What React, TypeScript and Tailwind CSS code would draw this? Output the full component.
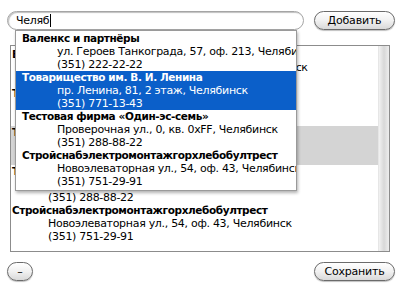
import React from "react";

type Item = { title: string; addr: string; phone: string };

const items: Item[] = [
  { title: "Валенкс и партнёры", addr: "ул. Героев Танкограда, 57, оф. 213, Челябинск", phone: "(351) 222-22-22" },
  { title: "Товарищество им. В. И. Ленина", addr: "пр. Ленина, 81, 2 этаж, Челябинск", phone: "(351) 771-13-43" },
  { title: "Тестовая фирма «Один-эс-семь»", addr: "Проверочная ул., 0, кв. 0xFF, Челябинск", phone: "(351) 288-88-22" },
  { title: "Стройснабэлектромонтажгорхлебобултрест", addr: "Новоэлеваторная ул., 54, оф. 43, Челябинск", phone: "(351) 751-29-91" },
];

const listItems: Item[] = [items[0], items[1], items[1], items[2], items[3]];

function AquaButton({ label, className }: { label: string; className: string }) {
  return (
    <div
      className={
        "flex items-center justify-center rounded-full border border-[#6b6b6b] bg-gradient-to-b from-[#ffffff] via-[#f1f1f1] to-[#d9d9d9] shadow-[0_1px_1px_rgba(0,0,0,0.25)] text-black text-[11px] leading-[13px] tracking-[-0.2px] " +
        className
      }
    >
      {label}
    </div>
  );
}

function Entry({ it, titlePad, addrPad, className }: { it: Item; titlePad: string; addrPad: string; className: string }) {
  return (
    <div className={"h-[39px] whitespace-nowrap " + className}>
      <div className={"h-[13px] font-bold text-[10.5px] tracking-[-0.4px] " + titlePad}>{it.title}</div>
      <div className={"h-[13px] " + addrPad}>{it.addr}</div>
      <div className={"h-[13px] " + addrPad}>{it.phone}</div>
    </div>
  );
}

export default function App() {
  return (
    <div
      className="relative w-[400px] h-[290px] overflow-hidden bg-white text-black text-[11px] leading-[13px] tracking-[-0.3px]"
      style={{ fontFamily: '"DejaVu Sans", Verdana, sans-serif' }}
    >
      {/* top row */}
      <div className="flex items-center pl-[7px] pt-[11px] gap-[10px]">
        <div className="flex items-center w-[297px] h-[19px] rounded-full border border-[#a5a5a5] shadow-[inset_1px_1px_1px_rgba(0,0,0,0.25)] pl-[8px]">
          <span>Челяб</span>
          <span className="inline-block w-px h-[13px] bg-black ml-[1px]" />
        </div>
        <AquaButton label="Добавить" className="w-[81px] h-[19px]" />
      </div>

      {/* list */}
      <div className="ml-[10px] mt-[15px] w-[380px] h-[207px] border border-[#8c8c8c] flex overflow-hidden">
        <div className="flex-1 pt-[2px] overflow-hidden">
          {listItems.map((it, i) => (
            <Entry
              key={i}
              it={it}
              titlePad="pl-[1px]"
              addrPad="pl-[37px]"
              className={i === 2 ? "bg-[#d4d4d4]" : ""}
            />
          ))}
        </div>
        <div className="w-[11px] h-full border-l border-[#e6e6e6] bg-gradient-to-r from-[#f2f2f2] via-[#d8d8d8] to-[#eeeeee]" />
      </div>

      {/* bottom row */}
      <div className="flex items-center justify-between pl-[7px] pr-[5px] mt-[10px]">
        <AquaButton label="–" className="w-[26px] h-[19px]" />
        <AquaButton label="Сохранить" className="w-[81px] h-[19px]" />
      </div>

      {/* autocomplete popup */}
      <div className="absolute left-[15px] top-[30px] w-[282px] h-[161px] bg-white border border-[#9a9a9a] shadow-[1px_2px_3px_rgba(0,0,0,0.3)] pt-[1px] overflow-hidden">
        {items.map((it, i) => (
          <Entry
            key={i}
            it={it}
            titlePad="pl-[6px]"
            addrPad="pl-[41px]"
            className={i === 1 ? "bg-[#0b5fc9] text-white" : ""}
          />
        ))}
      </div>
    </div>
  );
}
